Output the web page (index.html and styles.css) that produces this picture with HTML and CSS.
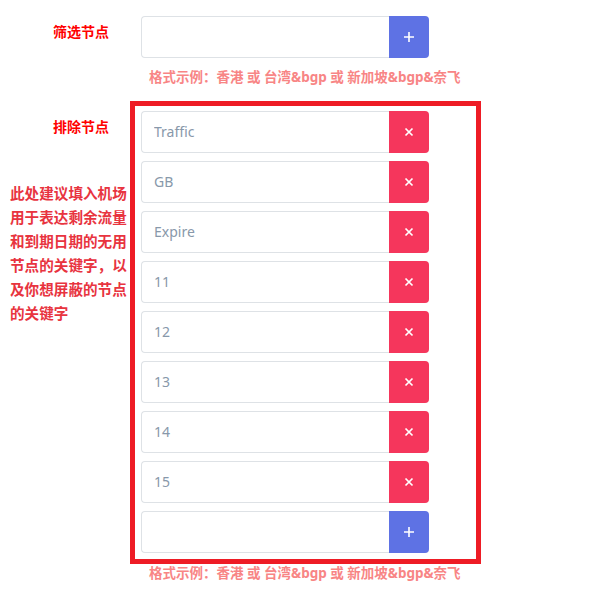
FILE: index.html
```html
<!DOCTYPE html>
<html lang="zh">
<head>
<meta charset="utf-8">
<link rel="stylesheet" href="styles.css">
</head>
<body>
<div class="form">
  <div class="row row-first">
    <div class="label-col">
      <div class="label">筛选节点</div>
    </div>
    <div class="field">
      <div class="list plain">
        <div class="group">
          <input class="input" type="text" value="">
          <button class="btn add"><svg width="12" height="12" viewBox="0 0 12 12"><path d="M6 1v10M1 6h10" stroke="#fff" stroke-width="1.6"/></svg></button>
        </div>
      </div>
      <div class="hint">格式示例：香港 或 台湾&amp;bgp 或 新加坡&amp;bgp&amp;奈飞</div>
    </div>
  </div>
  <div class="row">
    <div class="label-col">
      <div class="label">排除节点</div>
      <div class="desc">此处建议填入机场用于表达剩余流量和到期日期的无用节点的关键字，以及你想屏蔽的节点的关键字</div>
    </div>
    <div class="field">
      <div class="list boxed">
        <div class="group"><input class="input" type="text" value="Traffic"><button class="btn del"><svg width="12" height="12" viewBox="0 0 12 12"><path d="M2.5 2.5l7 7M9.5 2.5l-7 7" stroke="#fff" stroke-width="1.7"/></svg></button></div>
        <div class="group"><input class="input" type="text" value="GB"><button class="btn del"><svg width="12" height="12" viewBox="0 0 12 12"><path d="M2.5 2.5l7 7M9.5 2.5l-7 7" stroke="#fff" stroke-width="1.7"/></svg></button></div>
        <div class="group"><input class="input" type="text" value="Expire"><button class="btn del"><svg width="12" height="12" viewBox="0 0 12 12"><path d="M2.5 2.5l7 7M9.5 2.5l-7 7" stroke="#fff" stroke-width="1.7"/></svg></button></div>
        <div class="group"><input class="input" type="text" value="11"><button class="btn del"><svg width="12" height="12" viewBox="0 0 12 12"><path d="M2.5 2.5l7 7M9.5 2.5l-7 7" stroke="#fff" stroke-width="1.7"/></svg></button></div>
        <div class="group"><input class="input" type="text" value="12"><button class="btn del"><svg width="12" height="12" viewBox="0 0 12 12"><path d="M2.5 2.5l7 7M9.5 2.5l-7 7" stroke="#fff" stroke-width="1.7"/></svg></button></div>
        <div class="group"><input class="input" type="text" value="13"><button class="btn del"><svg width="12" height="12" viewBox="0 0 12 12"><path d="M2.5 2.5l7 7M9.5 2.5l-7 7" stroke="#fff" stroke-width="1.7"/></svg></button></div>
        <div class="group"><input class="input" type="text" value="14"><button class="btn del"><svg width="12" height="12" viewBox="0 0 12 12"><path d="M2.5 2.5l7 7M9.5 2.5l-7 7" stroke="#fff" stroke-width="1.7"/></svg></button></div>
        <div class="group"><input class="input" type="text" value="15"><button class="btn del"><svg width="12" height="12" viewBox="0 0 12 12"><path d="M2.5 2.5l7 7M9.5 2.5l-7 7" stroke="#fff" stroke-width="1.7"/></svg></button></div>
        <div class="group"><input class="input" type="text" value=""><button class="btn add"><svg width="12" height="12" viewBox="0 0 12 12"><path d="M6 1v10M1 6h10" stroke="#fff" stroke-width="1.6"/></svg></button></div>
      </div>
      <div class="hint hint-after">格式示例：香港 或 台湾&amp;bgp 或 新加坡&amp;bgp&amp;奈飞</div>
    </div>
  </div>
</div>
</body>
</html>
```
FILE: styles.css
```css
body {
  margin: 8px;
  background: #fff;
  font-family: "Noto Sans", "Noto Sans CJK SC", sans-serif;
}
.form {
  display: flex;
  flex-direction: column;
}
.row {
  display: grid;
  grid-template-columns: 122px 351px;
}
.row-first {
  margin-bottom: 14px;
}
.label-col {
  display: flex;
  flex-direction: column;
}
.label {
  text-align: right;
  padding-right: 21px;
  padding-top: 13px;
  font-size: 14px;
  line-height: 20px;
  font-weight: bold;
  color: #ff0000;
  font-family: "Noto Sans CJK SC", sans-serif;
}
.row:not(.row-first) .label {
  padding-top: 15px;
}
.desc {
  margin-top: 45px;
  padding-left: 2px;
  width: 117px;
  font-size: 14.6px;
  line-height: 24px;
  font-weight: bold;
  color: #e8343f;
  font-family: "Noto Sans CJK SC", sans-serif;
}
.list {
  display: flex;
  flex-direction: column;
  gap: 8px;
  padding: 8px 6px 0 11px;
}
.boxed {
  border: 5px solid #ee1c25;
  padding: 5px 6px 6px 6px;
}
.group {
  display: flex;
  width: 288px;
  height: 42px;
}
.input {
  box-sizing: border-box;
  width: 248px;
  height: 42px;
  margin: 0;
  border: 1px solid #dee2e6;
  border-right: none;
  border-radius: 4px 0 0 4px;
  padding: 0 12px 2px 12px;
  font-size: 14px;
  color: #8898aa;
  font-family: "Noto Sans", "Noto Sans CJK SC", sans-serif;
  background: #fff;
  outline: none;
}
.btn {
  width: 40px;
  height: 42px;
  border: none;
  margin: 0;
  padding: 0;
  border-radius: 0 4px 4px 0;
  display: flex;
  align-items: center;
  justify-content: center;
}
.add {
  background: #5e72e4;
}
.del {
  background: #f5365c;
}
.hint {
  margin-top: 9px;
  padding-left: 19px;
  font-size: 13.5px;
  line-height: 20px;
  font-weight: bold;
  color: #f88585;
  font-family: "Noto Sans", "Noto Sans CJK SC", sans-serif;
}
.hint-after {
  margin-top: -1px;
}
```
